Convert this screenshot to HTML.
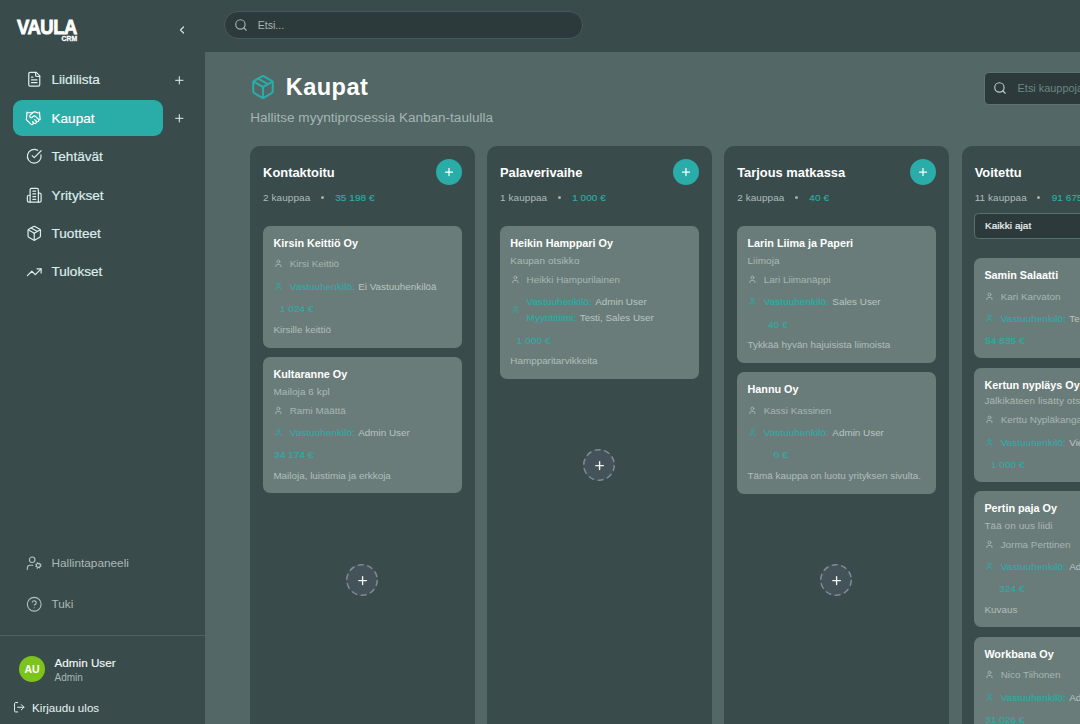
<!DOCTYPE html>
<html lang="fi">
<head>
<meta charset="utf-8">
<title>Vaula CRM - Kaupat</title>
<style>
*{box-sizing:border-box;margin:0;padding:0}
html,body{width:1080px;height:724px;overflow:hidden;background:#3a4b4b;font-family:"Liberation Sans",sans-serif;color:#fff}
svg{display:block;fill:none;stroke:currentColor;stroke-width:2;stroke-linecap:round;stroke-linejoin:round;overflow:visible}
#sidebar{position:absolute;left:0;top:0;width:205px;height:724px;background:#3a4b4b}
#logo{position:absolute;left:16.9px;top:15.2px;font-weight:bold;font-size:20.4px;line-height:24px;letter-spacing:-0.5px;transform:scaleX(.905);transform-origin:0 0;-webkit-text-stroke:.85px #fff;white-space:nowrap}
#crm{position:absolute;left:61.5px;top:33.6px;font-weight:bold;font-size:6.8px;line-height:9px;letter-spacing:.1px;-webkit-text-stroke:.3px #fff}
#collapse{position:absolute;left:176.2px;top:24px;width:12px;height:12px;color:#cfe9e8}
.nav{position:absolute;left:13px;width:150px;height:36px;border-radius:9px;display:flex;align-items:center;padding-left:12.6px;font-size:13.6px;color:#dceeed;-webkit-text-stroke:.18px currentColor}
.nav svg{width:16.5px;height:16.5px;margin-right:9.4px;flex:none;stroke-width:1.75}
.nav.active{background:#2aada8;color:#fff}
.nplus{position:absolute;left:173.1px;width:12.6px;height:12.6px;color:#e3f1f0}
.nplus svg{width:100%;height:100%;stroke-width:1.9}
.nav.low{font-size:11.8px;color:#aab9b7;-webkit-text-stroke:0}
.nav.low svg{stroke-width:1.6;color:#b4c3c1}
#sdiv{position:absolute;left:0;top:635px;width:205px;height:1px;background:#4f6261}
#avatar{position:absolute;left:19px;top:656px;width:26px;height:26px;border-radius:50%;background:#7cc41b;font-size:10.5px;font-weight:bold;text-align:center;line-height:26px;letter-spacing:-.2px}
#uname{position:absolute;left:54.5px;top:655px;font-size:11.7px;line-height:15px;color:#f2f8f7;-webkit-text-stroke:.15px #f2f8f7}
#urole{position:absolute;left:54.5px;top:671px;font-size:10px;line-height:13px;color:#a9b8b6}
#logout{position:absolute;left:13px;top:699.3px;height:16px;display:flex;align-items:center;font-size:11.6px;color:#e8f3f2}
#logout svg{width:12.5px;height:12.5px;margin-right:6.6px;stroke-width:1.9}
#topbar{position:absolute;left:205px;top:0;width:875px;height:52px;background:#3a4b4b}
#gsearch{position:absolute;left:19.1px;top:10.7px;width:358.9px;height:28.7px;border-radius:15px;background:#2d3a3b;border:1px solid #47585f;display:flex;align-items:center;padding-left:8.5px;font-size:10.6px;color:#a7b4b5}
#gsearch svg{width:14px;height:14px;margin-right:10.1px;stroke-width:2;color:#a3b1b2}
#main{position:absolute;left:205px;top:52px;width:875px;height:672px;background:#536766;overflow:hidden}
#ticon{position:absolute;left:45px;top:22px;width:26px;height:26px;color:#2aada8}
#ticon svg{width:26px;height:26px;stroke-width:1.9}
h1{position:absolute;left:80.7px;top:20.4px;font-size:23.6px;line-height:30px;font-weight:bold;letter-spacing:.45px}
#subt{position:absolute;left:45.3px;top:56.9px;font-size:13.53px;line-height:17px;color:#a6b5b3;white-space:nowrap}
#dsearch{position:absolute;left:779px;top:19.7px;width:200px;height:33.1px;border-radius:5px;background:#2d3a3b;border:1px solid #5f7372;display:flex;align-items:center;padding-left:8px;font-size:10.9px;color:#6e8583;white-space:nowrap}
#dsearch svg{width:14px;height:14px;margin-right:10.6px;stroke-width:2;color:#b9cbc9;flex:none}
.col{position:absolute;top:94px;width:224.5px;height:640px;border-radius:10px;background:#3a4b4b}
.ctitle{position:absolute;left:13px;top:17.7px;font-size:12.9px;line-height:18px;font-weight:bold;white-space:nowrap}
.cadd{position:absolute;left:185.8px;top:13px;width:26px;height:26px;border-radius:50%;background:#2aada8;color:#fff;padding:7px}
.cadd svg{width:12px;height:12px;stroke-width:2.5}
.cstat{position:absolute;left:13px;top:44.9px;letter-spacing:.09px;font-size:9.95px;line-height:14px;color:#afbcba;white-space:nowrap;display:flex;align-items:center}
.cstat i{display:block;width:3px;height:3px;border-radius:50%;background:#9fb0ae;margin:0 11.3px 0 10.6px}
.cstat b{font-weight:normal;color:#2aada8;-webkit-text-stroke:.15px #2aada8}
.card{position:absolute;left:13px;width:199px;border-radius:7px;background:#6a7c79;font-size:9.9px;white-space:nowrap;overflow:hidden}
.card div{position:absolute;height:15px;line-height:15px}
.t{left:10.3px;font-size:10.8px;font-weight:bold;color:#fff}
.s{left:10.3px;color:#aab9b6;font-size:9.95px;letter-spacing:.09px}
.c{left:26.6px;color:#a7b6b3}
.r{left:26.6px;color:#b8c5c2}
.r b{font-weight:normal;color:#2aada8;margin-right:3.4px;font-size:9.95px;letter-spacing:.05px;-webkit-text-stroke:.15px #2aada8}
.p{left:10.3px;width:40.3px;text-align:right;color:#2aada8;font-size:9.95px;letter-spacing:.09px;-webkit-text-stroke:.15px #2aada8}
.d{left:10.3px;color:#b0bebb}
.card svg{position:absolute;left:10.7px;width:8.8px;height:8.8px;stroke-width:2.3;color:#aab9b6}
.card svg.g{color:#2aada8}
.more{position:absolute;left:96px;width:32px;height:32px;border-radius:50%;background:#44535a;color:#eef3f3}
.more svg.ring{position:absolute;left:0;top:0;width:32px;height:32px;stroke:#7e8b94;stroke-width:1.5;stroke-dasharray:6 3.58;stroke-linecap:butt}
.more svg.pl{position:absolute;left:9.8px;top:10.1px;width:13.2px;height:13.2px;stroke-width:2.5}
.c4 .card{left:12.4px}
.sel{position:absolute;left:12px;top:67.3px;width:200px;height:25.5px;border-radius:4.5px;background:#2d3a3b;border:1px solid #5b6e70;font-size:9.95px;letter-spacing:.09px;line-height:23.6px;padding-left:10.3px;color:#f0f5f5;white-space:nowrap;-webkit-text-stroke:.2px #f0f5f5}
</style>
</head>
<body>
<div id="sidebar">
  <div id="logo">VAULA</div>
  <div id="crm">CRM</div>
  <div id="collapse"><svg viewBox="0 0 24 24" width="12" height="12" style="stroke-width:2.4"><path d="m15 18-6-6 6-6"/></svg></div>

  <div class="nav" style="top:61.5px"><svg viewBox="0 0 24 24"><path d="M15 2H6a2 2 0 0 0-2 2v16a2 2 0 0 0 2 2h12a2 2 0 0 0 2-2V7Z"/><path d="M14 2v4a2 2 0 0 0 2 2h4"/><path d="M10 9H8"/><path d="M16 13H8"/><path d="M16 17H8"/></svg>Liidilista</div>
  <div class="nplus" style="top:73.7px"><svg viewBox="0 0 24 24"><path d="M5 12h14"/><path d="M12 5v14"/></svg></div>

  <div class="nav active" style="top:100.3px;padding-left:12.3px"><svg viewBox="0 0 24 24" style="margin-right:9.7px"><path d="m11 17 2 2a1 1 0 1 0 3-3"/><path d="m14 14 2.500 2.500a1 1 0 1 0 3-3l-3.880-3.880a3 3 0 0 0-4.240 0l-.880.880a1 1 0 1 1-3-3l2.810-2.810a5.790 5.790 0 0 1 7.060-.870l.470.280a2 2 0 0 0 1.420.250L21 4"/><path d="m21 3 1 11h-2"/><path d="M3 3 2 14l6.500 6.500a1 1 0 1 0 3-3"/><path d="M3 4h8"/></svg>Kaupat</div>
  <div class="nplus" style="top:112.1px"><svg viewBox="0 0 24 24"><path d="M5 12h14"/><path d="M12 5v14"/></svg></div>

  <div class="nav" style="top:138.7px"><svg viewBox="0 0 24 24"><path d="M21.801 10A10 10 0 1 1 17 3.335"/><path d="m9 11 3 3L22 4"/></svg>Tehtävät</div>

  <div class="nav" style="top:177.1px"><svg viewBox="0 0 24 24"><path d="M6 22V4a2 2 0 0 1 2-2h8a2 2 0 0 1 2 2v18Z"/><path d="M6 12H4a2 2 0 0 0-2 2v6a2 2 0 0 0 2 2h2"/><path d="M18 9h2a2 2 0 0 1 2 2v9a2 2 0 0 1-2 2h-2"/><path d="M10 6h4"/><path d="M10 10h4"/><path d="M10 14h4"/><path d="M10 18h4"/></svg>Yritykset</div>

  <div class="nav" style="top:215.5px"><svg viewBox="0 0 24 24"><path d="m7.500 4.270 9 5.150"/><path d="M21 8a2 2 0 0 0-1-1.730l-7-4a2 2 0 0 0-2 0l-7 4A2 2 0 0 0 3 8v8a2 2 0 0 0 1 1.730l7 4a2 2 0 0 0 2 0l7-4A2 2 0 0 0 21 16Z"/><path d="m3.300 7 8.700 5 8.700-5"/><path d="M12 22V12"/></svg>Tuotteet</div>

  <div class="nav" style="top:253.9px"><svg viewBox="0 0 24 24"><polyline points="22 7 13.5 15.5 8.5 10.5 2 17"/><polyline points="16 7 22 7 22 13"/></svg>Tulokset</div>

  <div class="nav low" style="top:545px"><svg viewBox="0 0 24 24"><circle cx="18" cy="15" r="3"/><circle cx="9" cy="7" r="4"/><path d="M10 15H6a4 4 0 0 0-4 4v2"/><path d="m21.700 16.400-.900-.300"/><path d="m15.200 13.900-.900-.300"/><path d="m16.600 18.700-.300.900"/><path d="m19.100 12.200-.300.900"/><path d="m19.600 18.700-.400-1"/><path d="m16.800 12.300-.400-1"/><path d="m14.300 16.600 1-.400"/><path d="m20.700 13.800 1-.400"/></svg>Hallintapaneeli</div>

  <div class="nav low" style="top:586.3px"><svg viewBox="0 0 24 24"><circle cx="12" cy="12" r="10"/><path d="M9.090 9a3 3 0 0 1 5.830 1c0 2-3 3-3 3"/><path d="M12 17h.010"/></svg>Tuki</div>

  <div id="sdiv"></div>
  <div id="avatar">AU</div>
  <div id="uname">Admin User</div>
  <div id="urole">Admin</div>
  <div id="logout"><svg viewBox="0 0 24 24"><path d="M9 21H5a2 2 0 0 1-2-2V5a2 2 0 0 1 2-2h4"/><polyline points="16 17 21 12 16 7"/><line x1="21" x2="9" y1="12" y2="12"/></svg>Kirjaudu ulos</div>
</div>

<div id="topbar">
  <div id="gsearch"><svg viewBox="0 0 24 24"><circle cx="11" cy="11" r="8"/><path d="m21 21-4.300-4.300"/></svg>Etsi...</div>
</div>

<div id="main">
  <div id="ticon"><svg viewBox="0 0 24 24"><path d="m7.500 4.270 9 5.150"/><path d="M21 8a2 2 0 0 0-1-1.730l-7-4a2 2 0 0 0-2 0l-7 4A2 2 0 0 0 3 8v8a2 2 0 0 0 1 1.730l7 4a2 2 0 0 0 2 0l7-4A2 2 0 0 0 21 16Z"/><path d="m3.300 7 8.700 5 8.700-5"/><path d="M12 22V12"/></svg></div>
  <h1>Kaupat</h1>
  <div id="subt">Hallitse myyntiprosessia Kanban-taululla</div>
  <div id="dsearch"><svg viewBox="0 0 24 24"><circle cx="11" cy="11" r="8"/><path d="m21 21-4.300-4.300"/></svg>Etsi kauppoja...</div>

  <div class="col" style="left:45.1px">
    <div class="ctitle">Kontaktoitu</div>
    <div class="cadd"><svg viewBox="0 0 24 24"><path d="M5 12h14"/><path d="M12 5v14"/></svg></div>
    <div class="cstat">2 kauppaa<i></i><b>35 198 €</b></div>
    <div class="card" style="top:80.2px;height:121.7px">
      <div class="t" style="top:9.95px">Kirsin Keittiö Oy</div>
      <div class="c" style="top:29.95px">Kirsi Keittiö</div>
      <svg viewBox="0 0 24 24" style="top:33.2px"><path d="M19 21v-2a4 4 0 0 0-4-4H9a4 4 0 0 0-4 4v2"/><circle cx="12" cy="7" r="4"/></svg>
      <div class="r" style="top:52.95px"><b>Vastuuhenkilö:</b>Ei Vastuuhenkilöä</div>
      <svg class="g" viewBox="0 0 24 24" style="top:56px"><path d="M19 21v-2a4 4 0 0 0-4-4H9a4 4 0 0 0-4 4v2"/><circle cx="12" cy="7" r="4"/></svg>
      <div class="p" style="top:74.95px">1 024 €</div>
      <div class="d" style="top:95.95px">Kirsille keittiö</div>
    </div>
    <div class="card" style="top:210.9px;height:136.5px">
      <div class="t" style="top:10.25px">Kultaranne Oy</div>
      <div class="s" style="top:27.25px">Mailoja 6 kpl</div>
      <div class="c" style="top:46.25px">Rami Määttä</div>
      <svg viewBox="0 0 24 24" style="top:48.8px"><path d="M19 21v-2a4 4 0 0 0-4-4H9a4 4 0 0 0-4 4v2"/><circle cx="12" cy="7" r="4"/></svg>
      <div class="r" style="top:68.25px"><b>Vastuuhenkilö:</b>Admin User</div>
      <svg class="g" viewBox="0 0 24 24" style="top:71.2px"><path d="M19 21v-2a4 4 0 0 0-4-4H9a4 4 0 0 0-4 4v2"/><circle cx="12" cy="7" r="4"/></svg>
      <div class="p" style="top:90.25px">34 174 €</div>
      <div class="d" style="top:111.25px">Mailoja, luistimia ja erkkoja</div>
    </div>
    <div class="more" style="top:417.9px"><svg class="ring" viewBox="0 0 32 32"><circle cx="16" cy="16" r="15.25"/></svg><svg class="pl" viewBox="0 0 24 24"><path d="M5 12h14"/><path d="M12 5v14"/></svg></div>
  </div>

  <div class="col" style="left:282px">
    <div class="ctitle">Palaverivaihe</div>
    <div class="cadd"><svg viewBox="0 0 24 24"><path d="M5 12h14"/><path d="M12 5v14"/></svg></div>
    <div class="cstat">1 kauppaa<i></i><b>1 000 €</b></div>
    <div class="card" style="top:80.3px;height:152.7px">
      <div class="t" style="top:9.85px">Heikin Hamppari Oy</div>
      <div class="s" style="top:26.85px">Kaupan otsikko</div>
      <div class="c" style="top:45.85px">Heikki Hampurilainen</div>
      <svg viewBox="0 0 24 24" style="top:48.7px"><path d="M19 21v-2a4 4 0 0 0-4-4H9a4 4 0 0 0-4 4v2"/><circle cx="12" cy="7" r="4"/></svg>
      <div class="r" style="top:67.85px"><b>Vastuuhenkilö:</b>Admin User</div>
      <svg class="g" viewBox="0 0 24 24" style="top:78.85px"><path d="M19 21v-2a4 4 0 0 0-4-4H9a4 4 0 0 0-4 4v2"/><circle cx="12" cy="7" r="4"/></svg>
      <div class="r" style="top:83.85px"><b>Myyntitiimi:</b>Testi, Sales User</div>
      <div class="p" style="top:106.85px">1 000 €</div>
      <div class="d" style="top:126.85px">Hampparitarvikkeita</div>
    </div>
    <div class="more" style="top:303.3px"><svg class="ring" viewBox="0 0 32 32"><circle cx="16" cy="16" r="15.25"/></svg><svg class="pl" viewBox="0 0 24 24"><path d="M5 12h14"/><path d="M12 5v14"/></svg></div>
  </div>

  <div class="col" style="left:519.2px">
    <div class="ctitle">Tarjous matkassa</div>
    <div class="cadd"><svg viewBox="0 0 24 24"><path d="M5 12h14"/><path d="M12 5v14"/></svg></div>
    <div class="cstat">2 kauppaa<i></i><b>40 €</b></div>
    <div class="card" style="top:80.2px;height:136.7px">
      <div class="t" style="top:9.95px">Larin Liima ja Paperi</div>
      <div class="s" style="top:26.95px">Liimoja</div>
      <div class="c" style="top:45.95px">Lari Liimanäppi</div>
      <svg viewBox="0 0 24 24" style="top:48.9px"><path d="M19 21v-2a4 4 0 0 0-4-4H9a4 4 0 0 0-4 4v2"/><circle cx="12" cy="7" r="4"/></svg>
      <div class="r" style="top:67.95px"><b>Vastuuhenkilö:</b>Sales User</div>
      <svg class="g" viewBox="0 0 24 24" style="top:71.1px"><path d="M19 21v-2a4 4 0 0 0-4-4H9a4 4 0 0 0-4 4v2"/><circle cx="12" cy="7" r="4"/></svg>
      <div class="p" style="top:90.95px">40 €</div>
      <div class="d" style="top:110.95px">Tykkää hyvän hajuisista liimoista</div>
    </div>
    <div class="card" style="top:226.1px;height:121.5px">
      <div class="t" style="top:10.05px">Hannu Oy</div>
      <div class="c" style="top:31.05px">Kassi Kassinen</div>
      <svg viewBox="0 0 24 24" style="top:33.6px"><path d="M19 21v-2a4 4 0 0 0-4-4H9a4 4 0 0 0-4 4v2"/><circle cx="12" cy="7" r="4"/></svg>
      <div class="r" style="top:53.05px"><b>Vastuuhenkilö:</b>Admin User</div>
      <svg class="g" viewBox="0 0 24 24" style="top:56px"><path d="M19 21v-2a4 4 0 0 0-4-4H9a4 4 0 0 0-4 4v2"/><circle cx="12" cy="7" r="4"/></svg>
      <div class="p" style="top:75.05px">0 €</div>
      <div class="d" style="top:96.05px">Tämä kauppa on luotu yrityksen sivulta.</div>
    </div>
    <div class="more" style="top:417.9px"><svg class="ring" viewBox="0 0 32 32"><circle cx="16" cy="16" r="15.25"/></svg><svg class="pl" viewBox="0 0 24 24"><path d="M5 12h14"/><path d="M12 5v14"/></svg></div>
  </div>

  <div class="col c4" style="left:756.7px">
    <div class="ctitle">Voitettu</div>
    <div class="cadd"><svg viewBox="0 0 24 24"><path d="M5 12h14"/><path d="M12 5v14"/></svg></div>
    <div class="cstat">11 kauppaa<i></i><b>91 675 €</b></div>
    <div class="sel">Kaikki ajat</div>
    <div class="card" style="top:112.3px;height:99.4px">
      <div class="t" style="top:9.85px">Samin Salaatti</div>
      <div class="c" style="top:30.85px">Kari Karvaton</div>
      <svg viewBox="0 0 24 24" style="top:33.5px"><path d="M19 21v-2a4 4 0 0 0-4-4H9a4 4 0 0 0-4 4v2"/><circle cx="12" cy="7" r="4"/></svg>
      <div class="r" style="top:52.85px"><b>Vastuuhenkilö:</b>Testi User</div>
      <svg class="g" viewBox="0 0 24 24" style="top:55.8px"><path d="M19 21v-2a4 4 0 0 0-4-4H9a4 4 0 0 0-4 4v2"/><circle cx="12" cy="7" r="4"/></svg>
      <div class="p" style="top:74.85px">54 835 €</div>
    </div>
    <div class="card" style="top:221.7px;height:113.9px">
      <div class="t" style="top:10.45px">Kertun nypläys Oy</div>
      <div class="s" style="top:25.45px">Jälkikäteen lisätty otsikko</div>
      <div class="c" style="top:44.45px">Kerttu Nypläkangas</div>
      <svg viewBox="0 0 24 24" style="top:47.5px"><path d="M19 21v-2a4 4 0 0 0-4-4H9a4 4 0 0 0-4 4v2"/><circle cx="12" cy="7" r="4"/></svg>
      <div class="r" style="top:67.45px"><b>Vastuuhenkilö:</b>Viewer User</div>
      <svg class="g" viewBox="0 0 24 24" style="top:70.1px"><path d="M19 21v-2a4 4 0 0 0-4-4H9a4 4 0 0 0-4 4v2"/><circle cx="12" cy="7" r="4"/></svg>
      <div class="p" style="top:89.45px">1 000 €</div>
    </div>
    <div class="card" style="top:345.3px;height:136.1px">
      <div class="t" style="top:9.85px">Pertin paja Oy</div>
      <div class="s" style="top:26.85px">Tää on uus liidi</div>
      <div class="c" style="top:45.85px">Jorma Perttinen</div>
      <svg viewBox="0 0 24 24" style="top:48.4px"><path d="M19 21v-2a4 4 0 0 0-4-4H9a4 4 0 0 0-4 4v2"/><circle cx="12" cy="7" r="4"/></svg>
      <div class="r" style="top:67.85px"><b>Vastuuhenkilö:</b>Admin User</div>
      <svg class="g" viewBox="0 0 24 24" style="top:70.7px"><path d="M19 21v-2a4 4 0 0 0-4-4H9a4 4 0 0 0-4 4v2"/><circle cx="12" cy="7" r="4"/></svg>
      <div class="p" style="top:89.85px">324 €</div>
      <div class="d" style="top:110.85px">Kuvaus</div>
    </div>
    <div class="card" style="top:491.1px;height:120.9px">
      <div class="t" style="top:10.05px">Workbana Oy</div>
      <div class="c" style="top:30.05px">Nico Tiihonen</div>
      <svg viewBox="0 0 24 24" style="top:33.3px"><path d="M19 21v-2a4 4 0 0 0-4-4H9a4 4 0 0 0-4 4v2"/><circle cx="12" cy="7" r="4"/></svg>
      <div class="r" style="top:53.05px"><b>Vastuuhenkilö:</b>Admin User</div>
      <svg class="g" viewBox="0 0 24 24" style="top:55.7px"><path d="M19 21v-2a4 4 0 0 0-4-4H9a4 4 0 0 0-4 4v2"/><circle cx="12" cy="7" r="4"/></svg>
      <div class="p" style="top:75.05px">31 026 €</div>
    </div>
  </div>
</div>
</body>
</html>
